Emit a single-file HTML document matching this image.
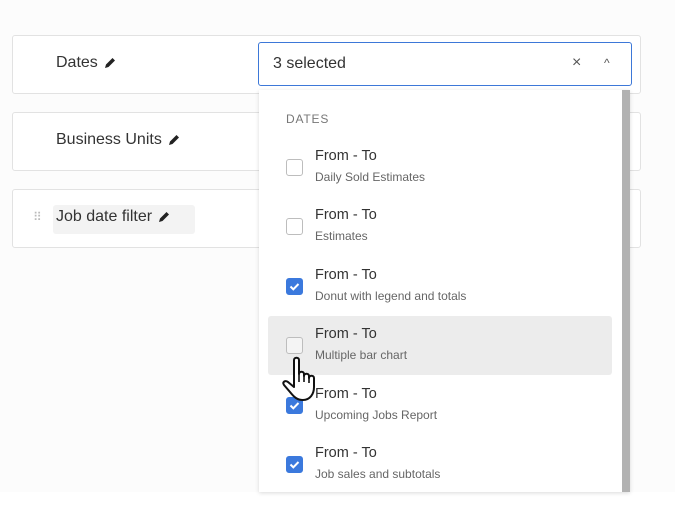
<!DOCTYPE html>
<html><head><style>
body{margin:0;width:675px;height:512px;background:#fff;font-family:"Liberation Sans",sans-serif;position:relative;overflow:hidden;color:#333}
.bg{position:absolute;left:0;top:0;width:675px;height:492px;background:#fcfcfc}
.card{position:absolute;left:12px;width:627px;height:57px;border:1px solid #e2e2e2;border-radius:3px;background:#fff}
.lbl{position:absolute;left:43px;font-size:16px;color:#333}
.pen{display:inline-block;vertical-align:middle;margin-left:6px}
.sel{position:absolute;left:258px;top:42px;width:372px;height:42px;border:1px solid #3d78d8;border-radius:3px;background:#fff}
.dd{position:absolute;left:259px;top:90px;width:371px;height:402px;background:#fff;box-shadow:0 1px 4px rgba(0,0,0,.15)}
.sb{position:absolute;left:622px;top:90px;width:8px;height:402px;background:#b2b2b2}
.item{position:absolute;left:268px;width:344px;height:59px}
.cb{position:absolute;left:18px;top:21px;width:15px;height:15px;border:1.5px solid #bdbdbd;border-radius:3px;background:#fff}
.cb.on{background:#3b79dd;border-color:#3b79dd}
.t{position:absolute;left:47px;top:10px;font-size:14.5px;color:#333}
.s{position:absolute;left:47px;top:32px;font-size:12px;color:#666}
</style></head><body>
<div class="bg"></div>
<div class="card" style="top:35px"><div class="lbl" style="top:18px">Dates<svg class="pen" width="12" height="12" viewBox="0 0 12 12"><path d="M1 11l1-3.5 6.5-6.5 2.5 2.5-6.5 6.5z" fill="#222"/></svg></div></div>
<div class="card" style="top:112px"><div class="lbl" style="top:18px">Business Units<svg class="pen" width="12" height="12" viewBox="0 0 12 12"><path d="M1 11l1-3.5 6.5-6.5 2.5 2.5-6.5 6.5z" fill="#222"/></svg></div></div>
<div class="card" style="top:189px">
<div style="position:absolute;left:40px;top:15px;width:142px;height:29px;background:#f3f3f3;border-radius:3px"></div>
<div style="position:absolute;left:20px;top:20px;font-size:12px;color:#bbb;letter-spacing:-1px">⠿</div>
<div class="lbl" style="top:18px">Job date filter<svg class="pen" width="12" height="12" viewBox="0 0 12 12"><path d="M1 11l1-3.5 6.5-6.5 2.5 2.5-6.5 6.5z" fill="#222"/></svg></div></div>
<div class="sel"><span style="position:absolute;left:14px;top:12px;font-size:16px;color:#333">3 selected</span>
<span style="position:absolute;left:313px;top:11px;font-size:16px;color:#555">×</span>
<span style="position:absolute;left:345px;top:13px;font-size:12px;color:#555">^</span></div>
<div class="dd">
<div style="position:absolute;left:27px;top:22px;font-size:12px;color:#777;letter-spacing:.8px">DATES</div>
</div>
<div class="item" style="top:138px"><div class="cb"></div><div class="t">From - To</div><div class="s">Daily Sold Estimates</div></div>
<div class="item" style="top:197px"><div class="cb"></div><div class="t">From - To</div><div class="s">Estimates</div></div>
<div class="item" style="top:257px"><div class="cb on"><svg width="15" height="15" viewBox="0 0 15 15" style="position:absolute;left:0;top:0"><path d="M3.5 7.5l2.8 2.8 5.2-5.3" stroke="#fff" stroke-width="2" fill="none"/></svg></div><div class="t">From - To</div><div class="s">Donut with legend and totals</div></div>
<div class="item" style="top:316px;background:#ececec;border-radius:3px"><div class="cb" style="background:#f4f4f4"></div><div class="t">From - To</div><div class="s">Multiple bar chart</div></div>
<div class="item" style="top:376px"><div class="cb on"><svg width="15" height="15" viewBox="0 0 15 15" style="position:absolute;left:0;top:0"><path d="M3.5 7.5l2.8 2.8 5.2-5.3" stroke="#fff" stroke-width="2" fill="none"/></svg></div><div class="t">From - To</div><div class="s">Upcoming Jobs Report</div></div>
<div class="item" style="top:435px"><div class="cb on"><svg width="15" height="15" viewBox="0 0 15 15" style="position:absolute;left:0;top:0"><path d="M3.5 7.5l2.8 2.8 5.2-5.3" stroke="#fff" stroke-width="2" fill="none"/></svg></div><div class="t">From - To</div><div class="s">Job sales and subtotals</div></div>
<div class="sb"></div>
<svg style="position:absolute;left:280px;top:356px" width="42" height="48" viewBox="0 0 42 48">
<path d="M14 4c0-3 5-3 5 0v14c0-3 5-3 5 0v2c0-3 5-3 5 0v2c0-3 5-3 5 0v9c0 7-4 13-11 13c-6 0-9-3-13-8l-6-7c-2-3 1-5 4-3l6 5z" fill="#fff" stroke="#111" stroke-width="2" stroke-linejoin="round"/>
<path d="M19 18v8M24 20v6M29 22v5" stroke="#111" stroke-width="1.6"/>
</svg>
</body></html>
